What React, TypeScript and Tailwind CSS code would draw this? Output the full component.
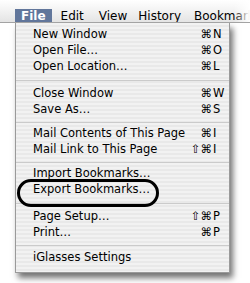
import React from "react";

type Item = { label: string; mods?: string; key?: string };
type Block = { items: Item[]; sepAfter?: number };

const blocks: Block[] = [
  {
    items: [
      { label: "New Window", mods: "⌘", key: "N" },
      { label: "Open File…", mods: "⌘", key: "O" },
      { label: "Open Location…", mods: "⌘", key: "L" },
    ],
    sepAfter: 11,
  },
  {
    items: [
      { label: "Close Window", mods: "⌘", key: "W" },
      { label: "Save As…", mods: "⌘", key: "S" },
    ],
    sepAfter: 8,
  },
  {
    items: [
      { label: "Mail Contents of This Page", mods: "⌘", key: "I" },
      { label: "Mail Link to This Page", mods: "⇧⌘", key: "I" },
    ],
    sepAfter: 8,
  },
  {
    items: [{ label: "Import Bookmarks…" }, { label: "Export Bookmarks…" }],
    sepAfter: 11,
  },
  {
    items: [
      { label: "Page Setup…", mods: "⇧⌘", key: "P" },
      { label: "Print…", mods: "⌘", key: "P" },
    ],
    sepAfter: 9,
  },
  { items: [{ label: "iGlasses Settings" }] },
];

function Row({ item }: { item: Item }) {
  return (
    <div className="flex h-[16px] items-center pl-[17px] pr-[3px] text-[11.5px] leading-none text-black">
      <span className="flex-1 whitespace-nowrap">{item.label}</span>
      {item.key && (
        <span className="flex items-center">
          <span className="whitespace-nowrap text-right">{item.mods}</span>
          <span className="w-[14px] pl-[1px]">{item.key}</span>
        </span>
      )}
    </div>
  );
}

function Sep({ h }: { h: number }) {
  const cls: Record<number, string> = {
    8: "h-[8px]",
    9: "h-[9px]",
    11: "h-[11px]",
  };
  return (
    <div className={`flex items-center ${cls[h]}`}>
      <div className="h-px w-full bg-[#cbcbcb]" />
    </div>
  );
}

export default function App() {
  return (
    <div
      className="relative h-[283px] w-[250px] overflow-hidden bg-white"
      style={{ fontFamily: '"DejaVu Sans", "Liberation Sans", sans-serif' }}
    >
      {/* menu bar */}
      <div className="relative flex h-[23px] items-end overflow-hidden border-b border-[#a3a3a3] bg-[linear-gradient(180deg,#ffffff_0%,#f6f6f6_35%,#e4e4e4_100%)] pl-[15px] text-[12px] text-black">
        <div className="flex h-[13px] items-center bg-[#61769b] px-[6px] font-bold text-white">
          File
        </div>
        <div className="flex h-[13px] items-center pl-[9px]">Edit</div>
        <div className="flex h-[13px] items-center pl-[15px]">View</div>
        <div className="flex h-[13px] items-center pl-[11px]">History</div>
        <div className="flex h-[13px] shrink-0 items-center whitespace-nowrap pl-[13px]">
          Bookmarks
        </div>
        <div className="absolute right-0 top-0 h-full w-[16px] bg-gradient-to-r from-transparent to-white" />
      </div>

      {/* menu */}
      <div className="ml-[15px] w-[215px] border-x border-b border-[#9a9a9a] bg-[image:repeating-linear-gradient(180deg,#f2f2f2_0px,#f2f2f2_2px,#e9e9e9_2px,#e9e9e9_4px)] pb-[6px] pt-[4px] shadow-[3px_5px_6px_rgba(0,0,0,0.55)]">
        {blocks.map((b, i) => (
          <div key={i}>
            {b.items.map((it) => (
              <Row key={it.label} item={it} />
            ))}
            {b.sepAfter && <Sep h={b.sepAfter} />}
          </div>
        ))}
      </div>

      {/* annotation oval */}
      <div className="absolute left-[17px] top-[179px] h-[28px] w-[142px] rounded-full border-[3px] border-black" />
    </div>
  );
}
